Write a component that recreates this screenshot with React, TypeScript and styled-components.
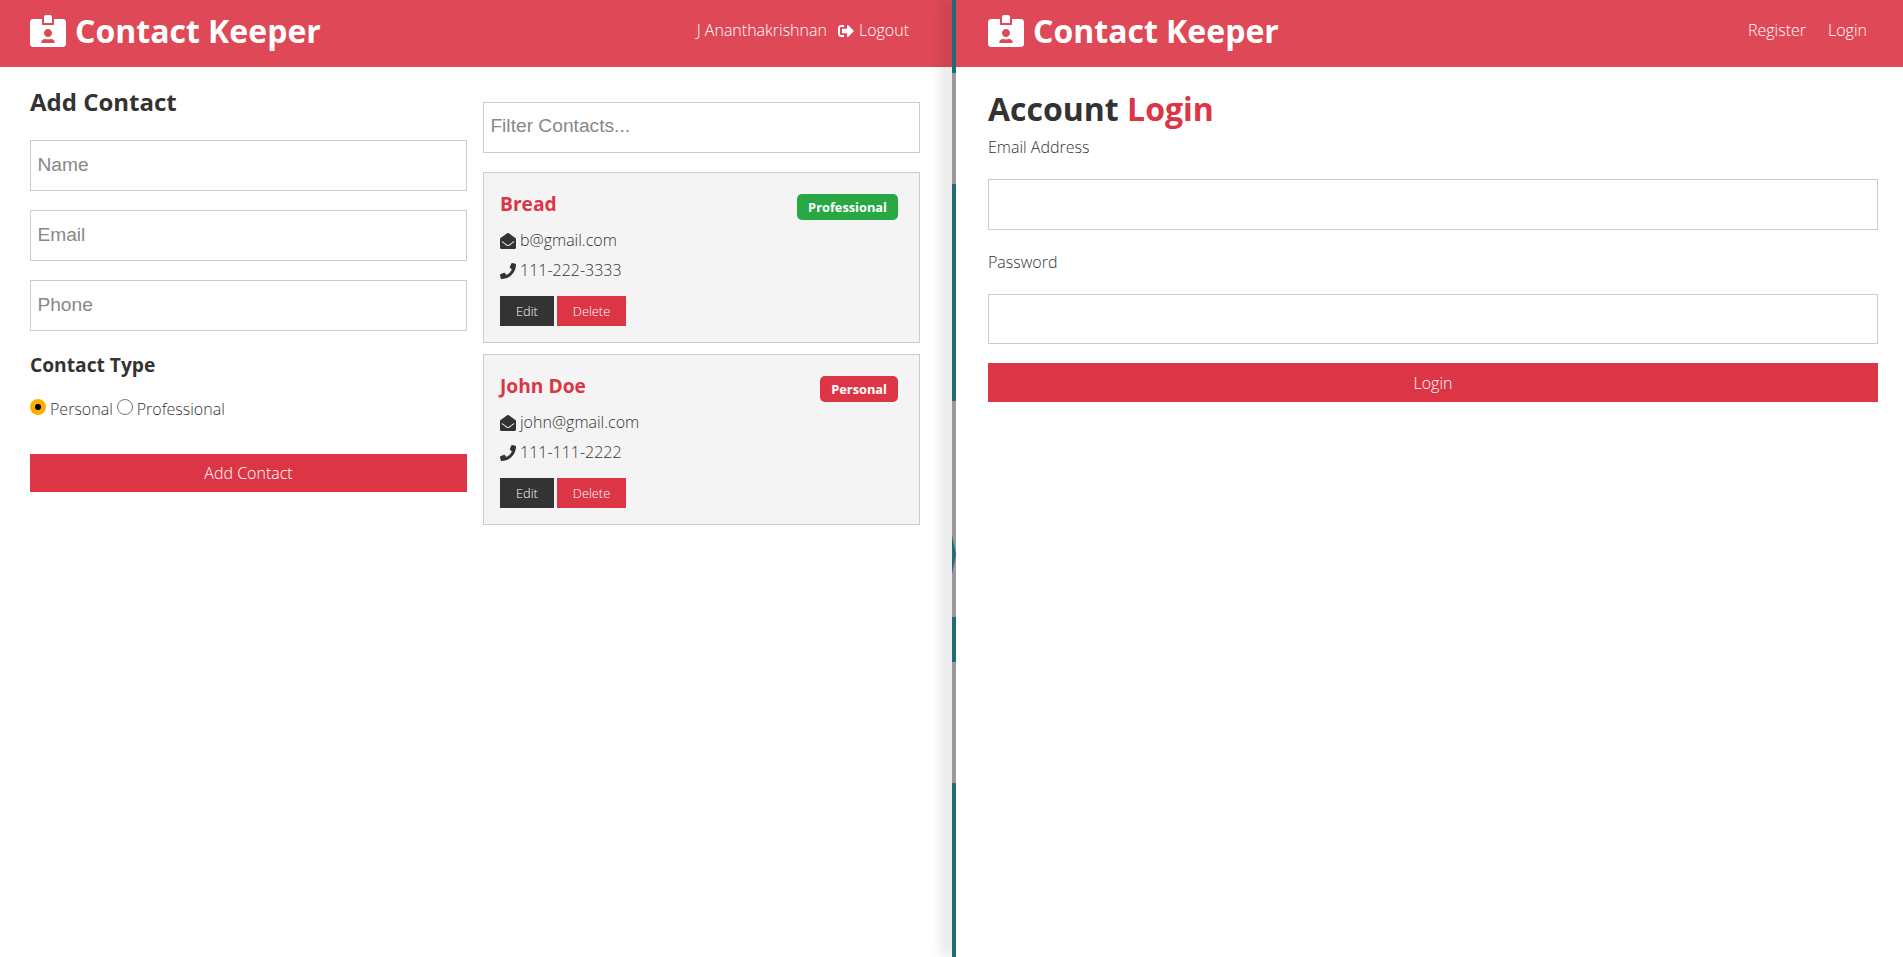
import styled, { createGlobalStyle } from "styled-components";
import { FaEnvelopeOpen, FaIdCardAlt, FaPhone, FaSignOutAlt } from "react-icons/fa";

const GlobalStyle = createGlobalStyle`
  * {
    box-sizing: border-box;
    margin: 0;
    padding: 0;
  }
  body {
    font-family: "Open Sans", "Liberation Sans", sans-serif;
    font-size: 16px;
    font-weight: 300;
    line-height: 1.6;
    color: #333;
    background: #fff;
  }
`;

const Page = styled.div`
  height: 957px;
  display: flex;
  overflow: hidden;
`;

const Pane = styled.section<{ $front?: boolean }>`
  position: relative;
  z-index: ${(p) => (p.$front ? 3 : 0)};
  background: ${(p) => (p.$front ? "#fff" : "transparent")};
  flex: ${(p) => (p.$front ? "1" : "0 0 952px")};
  min-width: 0;
`;

const Divider = styled.div`
  position: relative;
  z-index: 1;
  flex: 0 0 4px;
  display: flex;
  flex-direction: column;
  box-shadow: -6px 0 14px rgba(0, 0, 0, 0.32);
`;

const Segment = styled.div<{ $height: number; $gray?: boolean }>`
  position: relative;
  flex: 0 0 ${(p) => p.$height}px;
  background: ${(p) => (p.$gray ? "#9b9999" : "#206b75")};
`;

const Notch = styled.div`
  position: absolute;
  left: 0;
  top: 134px;
  width: 4px;
  height: 39px;
  background: #206b75;
  clip-path: polygon(0 0, 100% 50%, 0 100%);
`;

const Navbar = styled.header<{ $wide?: boolean }>`
  position: relative;
  z-index: 2;
  height: 67px;
  display: flex;
  align-items: center;
  justify-content: space-between;
  padding: 0 0 6px ${(p) => (p.$wide ? "32px" : "30px")};
  background: rgba(220, 53, 69, 0.9);
  color: #fff;
`;

const Brand = styled.h1`
  display: flex;
  align-items: center;
  gap: 9px;
  font-size: 32px;
  font-weight: 700;
  line-height: 51px;
  svg {
    width: 36px;
    height: 32px;
  }
`;

const NavList = styled.nav<{ $wide?: boolean }>`
  display: flex;
  align-items: center;
  gap: ${(p) => (p.$wide ? "22px" : "11px")};
  padding-right: ${(p) => (p.$wide ? "36px" : "43px")};
`;

const NavItem = styled.span`
  display: inline-flex;
  align-items: center;
  gap: 5px;
  color: #fff;
  svg {
    font-size: 16px;
  }
`;

const Columns = styled.main`
  display: grid;
  grid-template-columns: 437px 437px;
  column-gap: 16px;
  padding: 16px 0 0 30px;
`;

const FormHeading = styled.h2`
  font-size: 24px;
  font-weight: 700;
  line-height: 38px;
`;

const TextInput = styled.input`
  display: block;
  width: 100%;
  height: 51px;
  margin: 19px 0;
  padding: 6.4px 6.4px 8.4px;
  border: 1px solid #ccc;
  background: #fff;
  font-family: "Liberation Sans", Arial, sans-serif;
  font-size: 19.2px;
  &::placeholder {
    color: #888;
    opacity: 1;
  }
`;

const FilterInput = styled(TextInput)`
  padding-bottom: 10.4px;
`;

const AuthInput = styled(TextInput)`
  height: 50.5px;
  margin: 18.5px 0 19px;
`;

const SubHeading = styled.h3`
  font-size: 19.2px;
  font-weight: 700;
  line-height: 30.7px;
`;

const RadioRow = styled.div`
  display: flex;
  align-items: center;
  margin: 15px 0 32px;
  height: 26px;
`;

const RadioMark = styled.span<{ $checked?: boolean }>`
  flex: none;
  width: 16px;
  height: 16px;
  margin-top: -3px;
  border-radius: 50%;
  border: ${(p) => (p.$checked ? "none" : "1px solid #767676")};
  background: ${(p) =>
    p.$checked ? "radial-gradient(circle, #000 0 2.7px, #ffae00 3.4px)" : "#fff"};
`;

const RadioLabel = styled.span`
  margin: 2px 4px 0 4px;
`;

const WideButton = styled.button`
  display: block;
  width: 100%;
  padding-top: 2px;
  border: none;
  background: #dc3545;
  color: #fff;
  font: inherit;
  text-align: center;
`;

const AddButton = styled(WideButton)`
  height: 38px;
`;

const LoginButton = styled(WideButton)`
  height: 39px;
`;

const Card = styled.article`
  height: 171px;
  margin-bottom: 11px;
  padding: 16px 21px 16px 16px;
  border: 1px solid #ccc;
  background: #f4f4f4;
`;

const CardTop = styled.div`
  display: flex;
  align-items: flex-start;
  justify-content: space-between;
`;

const CardName = styled.h3`
  font-size: 19.2px;
  font-weight: 700;
  line-height: 30.7px;
  color: #dc3545;
`;

const Badge = styled.span<{ $green?: boolean }>`
  margin-top: 5px;
  height: 26px;
  padding: 0 11px;
  border-radius: 5px;
  background: ${(p) => (p.$green ? "#28a745" : "#dc3545")};
  color: #fff;
  font-size: 12.8px;
  font-weight: 700;
  line-height: 26px;
`;

const DetailList = styled.ul`
  list-style: none;
  margin-top: 8px;
`;

const DetailRow = styled.li`
  display: flex;
  align-items: center;
  gap: 4px;
  margin-bottom: 4.6px;
  svg {
    font-size: 16px;
  }
`;

const CardActions = styled.div`
  display: flex;
  gap: 3px;
  margin-top: 12px;
`;

const SmallButton = styled.button<{ $dark?: boolean }>`
  height: 30px;
  padding: 0 16px;
  border: none;
  background: ${(p) => (p.$dark ? "#333" : "#dc3545")};
  color: #fff;
  font: inherit;
  font-size: 12.8px;
`;

const AuthBody = styled.main`
  padding: 16px 25px 0 32px;
`;

const AuthHeading = styled.h1`
  font-size: 32px;
  font-weight: 700;
  line-height: 51.2px;
`;

const Accent = styled.span`
  color: #dc3545;
`;

const FieldLabel = styled.label`
  display: block;
  padding-top: 1px;
  line-height: 25.6px;
`;

const contacts = [
  { name: "Bread", type: "Professional", email: "b@gmail.com", phone: "111-222-3333" },
  { name: "John Doe", type: "Personal", email: "john@gmail.com", phone: "111-111-2222" },
];

const segments = [
  { height: 73 },
  { height: 111, gray: true },
  { height: 217 },
  { height: 216, gray: true, notch: true },
  { height: 45 },
  { height: 121, gray: true },
  { height: 174 },
];

export default function App() {
  return (
    <Page>
      <GlobalStyle />
      <Pane>
        <Navbar>
          <Brand>
            <FaIdCardAlt />
            Contact Keeper
          </Brand>
          <NavList>
            <NavItem>J Ananthakrishnan</NavItem>
            <NavItem>
              <FaSignOutAlt />
              Logout
            </NavItem>
          </NavList>
        </Navbar>
        <Columns>
          <form>
            <FormHeading>Add Contact</FormHeading>
            <TextInput placeholder="Name" />
            <TextInput placeholder="Email" />
            <TextInput placeholder="Phone" />
            <SubHeading>Contact Type</SubHeading>
            <RadioRow>
              <RadioMark $checked />
              <RadioLabel>Personal</RadioLabel>
              <RadioMark />
              <RadioLabel>Professional</RadioLabel>
            </RadioRow>
            <AddButton type="button">Add Contact</AddButton>
          </form>
          <div>
            <FilterInput placeholder="Filter Contacts..." />
            {contacts.map((c) => (
              <Card key={c.name}>
                <CardTop>
                  <CardName>{c.name}</CardName>
                  <Badge $green={c.type === "Professional"}>{c.type}</Badge>
                </CardTop>
                <DetailList>
                  <DetailRow>
                    <FaEnvelopeOpen />
                    {c.email}
                  </DetailRow>
                  <DetailRow>
                    <FaPhone />
                    {c.phone}
                  </DetailRow>
                </DetailList>
                <CardActions>
                  <SmallButton $dark type="button">
                    Edit
                  </SmallButton>
                  <SmallButton type="button">Delete</SmallButton>
                </CardActions>
              </Card>
            ))}
          </div>
        </Columns>
      </Pane>
      <Divider>
        {segments.map((s, i) => (
          <Segment key={i} $height={s.height} $gray={s.gray}>
            {s.notch && <Notch />}
          </Segment>
        ))}
      </Divider>
      <Pane $front>
        <Navbar $wide>
          <Brand>
            <FaIdCardAlt />
            Contact Keeper
          </Brand>
          <NavList $wide>
            <NavItem>Register</NavItem>
            <NavItem>Login</NavItem>
          </NavList>
        </Navbar>
        <AuthBody>
          <AuthHeading>
            Account <Accent>Login</Accent>
          </AuthHeading>
          <form>
            <FieldLabel>Email Address</FieldLabel>
            <AuthInput type="email" />
            <FieldLabel>Password</FieldLabel>
            <AuthInput type="password" />
            <LoginButton type="button">Login</LoginButton>
          </form>
        </AuthBody>
      </Pane>
    </Page>
  );
}
